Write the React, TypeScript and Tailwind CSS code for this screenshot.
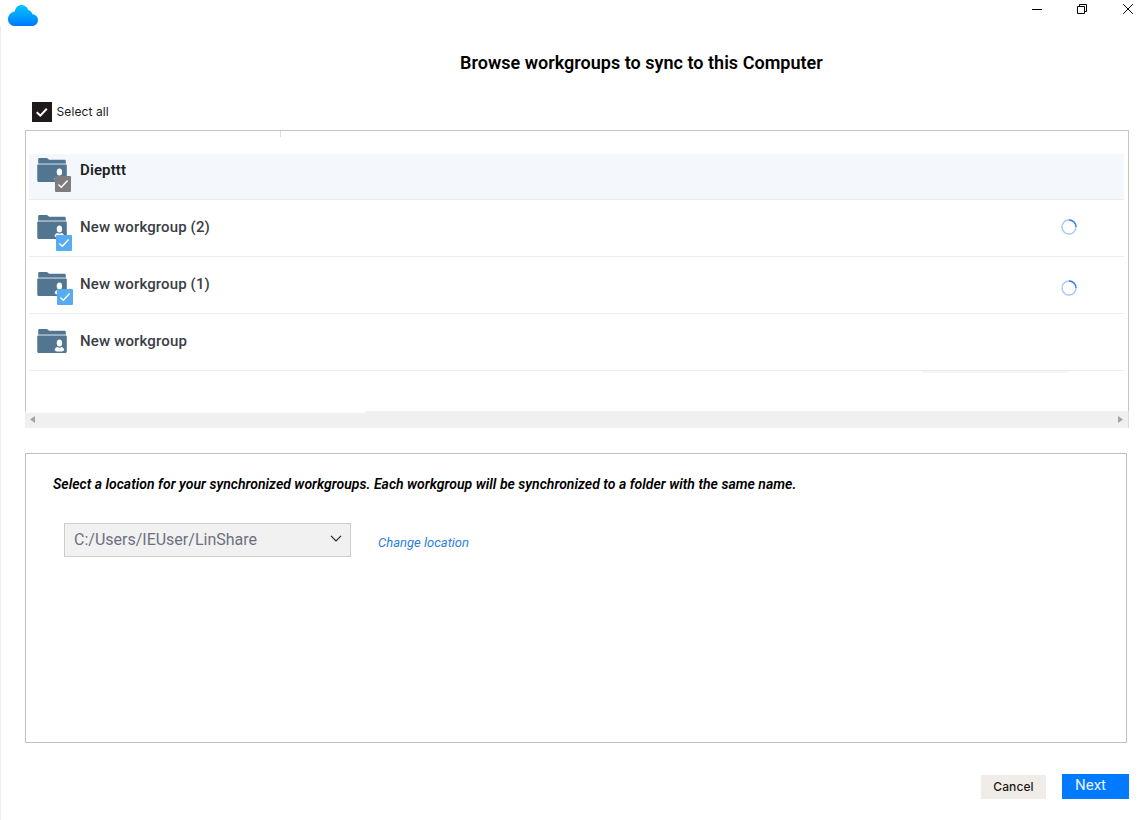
import React from "react";

type Badge = { tone: string; place: string };
type Group = {
  name: string;
  row: string;
  text: string;
  icon: string;
  badge?: Badge;
  spinner?: string;
};

const groups: Group[] = [
  {
    name: "Diepttt",
    row: "h-[46px] bg-[#f4f7fc]",
    text: "mt-[6px] font-semibold tracking-[0.12px] text-[#1c1f24]",
    icon: "mt-1",
    badge: { tone: "bg-[#7d7d7d]", place: "left-[18px] top-[18px]" },
  },
  {
    name: "New workgroup (2)",
    row: "h-[57px]",
    text: "mt-[17px] font-medium tracking-[0.13px] text-[#3a3e43]",
    icon: "mt-[15px]",
    badge: { tone: "bg-[#58abf0]", place: "left-[19px] top-[20px]" },
    spinner: "mt-[19px]",
  },
  {
    name: "New workgroup (1)",
    row: "h-[57px]",
    text: "mt-[17px] font-medium tracking-[0.13px] text-[#3a3e43]",
    icon: "mt-[15px]",
    badge: { tone: "bg-[#58abf0]", place: "left-[20px] top-[17px]" },
    spinner: "mt-[23px]",
  },
  {
    name: "New workgroup",
    row: "h-[57px]",
    text: "mt-[17px] font-medium tracking-[0.15px] text-[#3a3e43]",
    icon: "mt-[15px]",
  },
];

function Cloud() {
  return (
    <svg className="mt-[5px] ml-2 h-[21px] w-[30px]" viewBox="0 0 30 21">
      <defs>
        <linearGradient id="cloud" x1="0" y1="0" x2="0" y2="1">
          <stop offset="0" stopColor="#00c6fb" />
          <stop offset="1" stopColor="#0079ff" />
        </linearGradient>
      </defs>
      <path
        d="M7 21C3 21 0 18 0 14.2C0 10 3 7 6.8 6.4C7.5 2.6 10 0 13.6 0C17 0 19.3 2.2 20.2 5C22.3 5.4 23.8 7 24.5 9.2C27.8 9.5 30 12 30 15C30 18.4 27.4 21 24 21Z"
        fill="url(#cloud)"
      />
    </svg>
  );
}

function Folder() {
  return (
    <svg className="block h-6 w-[30px]" viewBox="0 0 30 24">
      <path d="M1.2 6V1.4C1.2.5 1.8 0 2.5 0H10L12.2 1.8H27.5C28.3 1.8 28.8 2.4 28.8 3.1V6Z" fill="#527592" />
      <path d="M1 5.2H29V6.8H1Z" fill="#a5b8c6" />
      <path d="M.2 6.8H29.8V22.5C29.8 23.4 29.2 24 28.4 24H1.7C.9 24 .3 23.4 .3 22.5Z" fill="#527592" />
      <ellipse cx="22.4" cy="14" rx="2.7" ry="3.5" fill="#fff" />
      <path d="M20.2 18C21.6 19 23.2 19 24.6 18C26.3 18.5 27.2 19.6 27.2 21.4Q22.4 23.8 17.6 21.4C17.6 19.6 18.5 18.5 20.2 18Z" fill="#fff" />
    </svg>
  );
}

function Spinner({ className }: { className: string }) {
  return (
    <svg className={`ml-auto h-4 w-4 shrink-0 ${className}`} viewBox="0 0 16 16" fill="none">
      <circle cx="8" cy="8" r="7" stroke="#a9c8fa" strokeWidth="1.4" />
      <path d="M8 1A7 7 0 0 1 15 8" stroke="#3381ee" strokeWidth="1.4" />
    </svg>
  );
}

function WindowBar() {
  return (
    <header className="flex h-[26px] shrink-0 justify-between">
      <Cloud />
      <svg className="h-5 w-[118px]" viewBox="0 0 118 20" fill="none" stroke="#000">
        <path d="M2 9.5H12" />
        <path d="M47.5 6.5H54.5V13.5H47.5ZM49.5 6V4.5H56.5V11.5H55" />
        <path d="M93.2 4.2L102.8 13.8M102.8 4.2L93.2 13.8" />
      </svg>
    </header>
  );
}

export default function App() {
  return (
    <div className="flex h-[820px] w-full flex-col overflow-hidden bg-white font-['Roboto',sans-serif]">
      <WindowBar />
      <main className="flex min-h-0 flex-1 flex-col border-l border-[#f0ebe6] pl-6">
        <h1 className="ml-[435px] mt-[25px] h-6 whitespace-nowrap text-[18px] leading-6 font-semibold tracking-[0.02px] text-black">
          Browse workgroups to sync to this Computer
        </h1>
        <label className="mt-[27px] ml-[7px] flex h-5 items-center gap-[4.5px]">
          <span className="flex h-5 w-5 items-center justify-center bg-[#1f1b1b]">
            <svg className="h-5 w-5" viewBox="0 0 20 20" fill="none" stroke="#fff" strokeWidth="2">
              <path d="M4.7 10.2L8.3 13.6L14.8 6.8" />
            </svg>
          </span>
          <span className="whitespace-nowrap font-['Inter',sans-serif] text-[12px] leading-5 tracking-[0.1px] text-[#201b1b]">Select all</span>
        </label>

        <section className="mt-2 flex h-[298px] w-[1104px] shrink-0 flex-col">
          <div className="flex h-[281px] flex-col border-x border-t border-[#c5c5bb] pr-1 pl-[3px]">
            <div className="h-[23px] shrink-0">
              <div className="h-[6px] w-[252px] border-r border-[#dfdfd9]" />
            </div>
            {groups.map((g) => (
              <div key={g.name} className={`flex shrink-0 items-start border-b border-[#ececee] pr-[47px] pl-2 ${g.row}`}>
                <div className={`relative h-6 w-[30px] shrink-0 ${g.icon}`}>
                  <Folder />
                  {g.badge && (
                    <span className={`absolute h-4 w-4 rounded-[1px] ${g.badge.tone} ${g.badge.place}`}>
                      <svg className="block h-4 w-4" viewBox="0 0 16 16" fill="none" stroke="#fff" strokeWidth="1.4">
                        <path d="M3.4 8.4L6.3 11.3L12.6 4.6" />
                      </svg>
                    </span>
                  )}
                </div>
                <span className={`ml-[13px] h-5 whitespace-nowrap text-[15px] leading-5 ${g.text}`}>{g.name}</span>
                {g.spinner && <Spinner className={g.spinner} />}
              </div>
            ))}
            <div className="ml-[893px] h-[2px] w-[146px] bg-[#f5f5f5]" />
          </div>
          <div className="flex h-[17px] flex-col border-r border-[#dcdcd7] bg-[#f0f0f0]">
            <div className="ml-[2px] h-[2px] w-[338px] shrink-0 bg-white" />
            <div className="flex h-[13px] items-center justify-between px-[5px]">
              <svg className="h-[7px] w-[5px]" viewBox="0 0 5 7"><path d="M5 0V7L0 3.5Z" fill="#a3a3a3" /></svg>
              <svg className="h-[7px] w-[5px]" viewBox="0 0 5 7"><path d="M0 0V7L5 3.5Z" fill="#a3a3a3" /></svg>
            </div>
          </div>
        </section>

        <section className="mt-[25px] flex h-[290px] w-[1102px] shrink-0 flex-col border border-[#c0c0c0]">
          <p className="mt-5 ml-[27px] h-5 whitespace-nowrap text-[14px] leading-5 font-semibold tracking-[0.025px] text-black italic">
            Select a location for your synchronized workgroups. Each workgroup will be synchronized to a folder with the same name.
          </p>
          <div className="mt-[29px] ml-[38px] flex items-center gap-[27px]">
            <button className="flex h-[34px] w-[287px] items-center justify-between border border-[#cccccc] bg-[#f1f1f1] pr-2 pl-[9px] text-[16px] text-[#6d7080]">
              <span className="whitespace-nowrap">C:/Users/IEUser/LinShare</span>
              <svg className="h-3 w-3" viewBox="0 0 12 12" fill="none" stroke="#222" strokeWidth="1.2">
                <path d="M1 1.8L6 7L11 1.8" />
              </svg>
            </button>
            <a className="mt-[5px] whitespace-nowrap text-[13px] leading-5 text-[#2a7fdf] italic">Change location</a>
          </div>
        </section>

        <footer className="mt-[31px] ml-[956px] flex items-start gap-4">
          <button className="mt-px flex h-6 w-[65px] items-center justify-center bg-[#f0ede8] font-['Inter',sans-serif] text-[12px] font-medium tracking-[0.1px] text-[#1c1815]">
            Cancel
          </button>
          <button className="flex h-[25px] w-[67px] bg-[#007bff] pl-[13px] text-[15px] leading-[23px] text-[#e9f3ff]">
            Next
          </button>
        </footer>
      </main>
    </div>
  );
}
